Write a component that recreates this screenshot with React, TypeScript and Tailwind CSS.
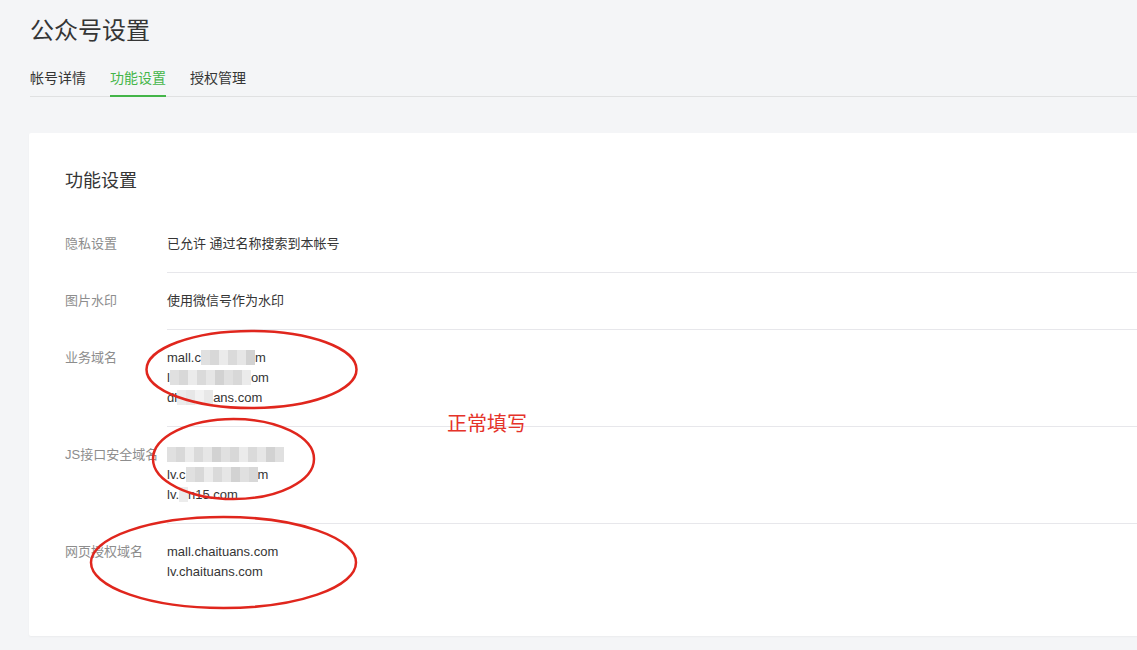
const shades = ["bg-[#dadada]", "bg-[#e6e6e6]", "bg-[#d2d2d2]", "bg-[#e0e0e0]", "bg-[#d8d8d8]", "bg-[#ebebeb]"];

function Blur({ cells, light }: { cells: number; light?: boolean }) {
  return (
    <span className={`inline-flex h-[15px] align-[-3px] blur-[0.6px] ${light ? "opacity-60" : ""}`}>
      {Array.from({ length: cells }).map((_, i) => (
        <span key={i} className={`h-full w-[9px] ${shades[(i * 7 + 3) % shades.length]}`} />
      ))}
    </span>
  );
}

function Row({ label, children, last }: { label: string; children: React.ReactNode; last?: boolean }) {
  return (
    <div className="flex">
      <div className="w-[102px] shrink-0 whitespace-nowrap py-[18px] text-[13px] leading-[20px] text-[#8d8d8d]">{label}</div>
      <div className={`flex-1 py-[18px] text-[13px] leading-[20px] text-[#353535] ${last ? "" : "border-b border-[#e7e7eb]"}`}>
        {children}
      </div>
    </div>
  );
}

export default function App() {
  return (
    <div
      className="relative min-h-[650px] overflow-hidden bg-[#f4f5f7] pl-[30px]"
      style={{ fontFamily: '"Liberation Sans", "Noto Sans CJK SC", sans-serif' }}
    >
      <h1 className="pt-[15px] text-[24px] leading-[32px] font-normal text-[#353535]">公众号设置</h1>

      <div className="mt-[21px] flex gap-[24px] border-b border-[#e0e1e2] text-[14px] leading-[20px]">
        <a className="-mb-px pb-[9px] text-[#353535]">帐号详情</a>
        <a className="-mb-px border-b-2 border-[#44b549] pb-[7px] text-[#44b549]">功能设置</a>
        <a className="-mb-px pb-[9px] text-[#353535]">授权管理</a>
      </div>

      <div className="-ml-px -mr-[40px] mt-[36px] rounded-[2px] bg-white pb-[36px] pl-[36px] pt-[36px] shadow-[0_1px_2px_rgba(0,0,0,0.04)]">
        <h2 className="mb-[23px] text-[18px] leading-[24px] font-normal text-[#353535]">功能设置</h2>

        <Row label="隐私设置">已允许 通过名称搜索到本帐号</Row>
        <Row label="图片水印">使用微信号作为水印</Row>
        <Row label="业务域名">
          <div>
            mall.c<Blur cells={6} />m
          </div>
          <div>
            l<Blur cells={9} />om
          </div>
          <div>
            dl<Blur cells={4} light />ans.com
          </div>
        </Row>
        <Row label="JS接口安全域名">
          <div>
            <Blur cells={13} />
          </div>
          <div>
            lv.c<Blur cells={8} />m
          </div>
          <div>
            lv.<Blur cells={1} light />n15.com
          </div>
        </Row>
        <Row label="网页授权域名" last>
          <div>mall.chaituans.com</div>
          <div>lv.chaituans.com</div>
        </Row>
      </div>

      <div className="absolute left-[447px] top-[411px] text-[20px] leading-[26px] text-[#e5332a]">正常填写</div>

      <svg className="pointer-events-none absolute left-0 top-0" width="1137" height="650">
        <g fill="none" stroke="#e0261d" strokeWidth="2.5">
          <ellipse cx="251.5" cy="369.5" rx="105" ry="38.5" />
          <ellipse cx="233.5" cy="459" rx="80.5" ry="40" />
          <ellipse cx="223.5" cy="562.5" rx="132.5" ry="45.5" />
        </g>
      </svg>
    </div>
  );
}
